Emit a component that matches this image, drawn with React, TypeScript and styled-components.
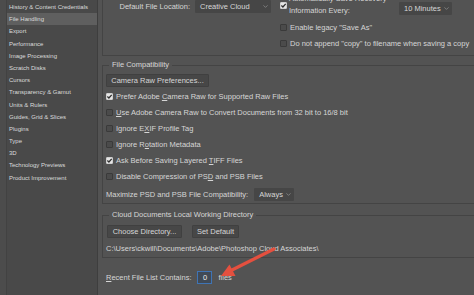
import styled, { createGlobalStyle } from 'styled-components';
import { ChevronDown } from 'lucide-react';

const GlobalStyle = createGlobalStyle`
  html, body {
    margin: 0;
    padding: 0;
    background: #535353;
  }

  * {
    box-sizing: border-box;
  }
`;

const navItems = [
  'History & Content Credentials',
  'File Handling',
  'Export',
  'Performance',
  'Image Processing',
  'Scratch Disks',
  'Cursors',
  'Transparency & Gamut',
  'Units & Rulers',
  'Guides, Grid & Slices',
  'Plugins',
  'Type',
  '3D',
  'Technology Previews',
  'Product Improvement',
];

const Check = ({ checked }: { checked?: boolean }) => (
  <CheckBox $checked={checked}>
    {checked && (
      <svg width='7' height='7' viewBox='0 0 7 7'>
        <path d='M1.4 3.6 L2.9 5 L5.7 1.9' fill='none' stroke='#2e2e2e' strokeWidth='1.3' />
      </svg>
    )}
  </CheckBox>
);

const Select = ({ value, width }: { value: string; width: number }) => (
  <SelectBox $width={width}>
    <span>{value}</span>
    <ChevronDown size={7} strokeWidth={2.2} />
  </SelectBox>
);

const App = () => {
  return (
    <Window>
      <GlobalStyle />
      <Sidebar>
        <NavList>
          {navItems.map(item => (
            <NavItem key={item} $active={item === 'File Handling'}>
              {item}
            </NavItem>
          ))}
        </NavList>
      </Sidebar>

      <Main>
        <SavingGroup>
          <LocationCol>
            <span>Default File Location:</span>
            <Select value='Creative Cloud' width={76} />
          </LocationCol>
          <SavingCol>
            <RecoveryRow>
              <Check checked />
              <TwoLine>
                Automatically Save Recovery
                <br />
                Information Every:
              </TwoLine>
              <Select value='10 Minutes' width={53} />
            </RecoveryRow>
            <CheckRow>
              <Check />
              Enable legacy "Save As"
            </CheckRow>
            <CheckRow>
              <Check />
              Do not append "copy" to filename when saving a copy
            </CheckRow>
          </SavingCol>
        </SavingGroup>

        <Group>
          <Legend>File Compatibility</Legend>
          <Button $width={103}>Camera Raw Preferences...</Button>
          <CheckList>
            <CheckRow>
              <Check checked />
              <span>
                Prefer Adobe <u>C</u>amera Raw for Supported Raw Files
              </span>
            </CheckRow>
            <CheckRow>
              <Check />
              <span>
                <u>U</u>se Adobe Camera Raw to Convert Documents from 32 bit to 16/8 bit
              </span>
            </CheckRow>
            <CheckRow>
              <Check />
              <span>
                Ignore E<u>X</u>IF Profile Tag
              </span>
            </CheckRow>
            <CheckRow>
              <Check />
              <span>
                Ignore R<u>o</u>tation Metadata
              </span>
            </CheckRow>
            <CheckRow>
              <Check checked />
              <span>
                Ask Before Saving Layered <u>T</u>IFF Files
              </span>
            </CheckRow>
            <CheckRow>
              <Check />
              <span>
                Disable Compression of PS<u>D</u> and PSB Files
              </span>
            </CheckRow>
            <MaximizeRow>
              <span>Maximize PSD and PSB File Compatibility:</span>
              <Select value='Always' width={40} />
            </MaximizeRow>
          </CheckList>
        </Group>

        <CloudGroup>
          <Legend>Cloud Documents Local Working Directory</Legend>
          <ButtonRow>
            <Button $width={75}>Choose Directory...</Button>
            <Button $width={47}>Set Default</Button>
          </ButtonRow>
          <PathText>C:\Users\ckwill\Documents\Adobe\Photoshop Cloud Associates\</PathText>
        </CloudGroup>

        <RecentRow>
          <span>
            <u>R</u>ecent File List Contains:
          </span>
          <NumberInput>0</NumberInput>
          <span>files</span>
        </RecentRow>
      </Main>

      <Arrow width='474' height='295' viewBox='0 0 474 295'>
        <line x1='274' y1='249' x2='232' y2='270' stroke='#e4503f' strokeWidth='3.2' strokeLinecap='round' />
        <polygon points='221,276 229.5,264.5 235.5,276' fill='#e4503f' />
      </Arrow>
    </Window>
  );
};

const Window = styled.div`
  position: relative;
  display: flex;
  width: 474px;
  height: 295px;
  overflow: hidden;

  background: #535353;
  color: #d6d6d6;
  font-family: 'Liberation Sans', Arial, sans-serif;
  font-size: 7.5px;
`;

const Sidebar = styled.nav`
  flex: none;
  width: 98px;
  padding-left: 6px;

  background: #4c4c4c;
  border-right: 1px solid #3e3e3e;
`;

const NavList = styled.ul`
  height: 100%;
  margin: 0;
  padding: 1px 0 0;
  list-style: none;

  background: #494949;
  border-left: 1px solid #424242;
`;

const NavItem = styled.li<{ $active?: boolean }>`
  height: 12.2px;
  padding-left: 2px;

  white-space: nowrap;
  font-size: 6px;
  line-height: 12.2px;

  color: #dcdcdc;
  background: ${({ $active }) => ($active ? '#5f5f5f' : 'transparent')};
`;

const Main = styled.main`
  flex: 1;
  min-width: 0;
  padding-left: 4px;
  overflow: hidden;
`;

const SavingGroup = styled.div`
  display: flex;
  width: 420px;
  height: 68px;
  margin-top: -12px;
  padding-top: 4px;

  border: 1px solid #444444;
`;

const LocationCol = styled.div`
  display: flex;
  justify-content: flex-end;
  align-items: center;
  gap: 5px;

  flex: none;
  width: 176px;
  height: 13px;
  margin-top: 7px;
  padding-right: 8px;
  white-space: nowrap;
`;

const SavingCol = styled.div`
  display: flex;
  flex-direction: column;
  gap: 4px;
  padding-left: 1px;
`;

const RecoveryRow = styled.div`
  display: flex;
  align-items: flex-start;
  gap: 2px;

  height: 24px;

  > span:first-child {
    margin-top: 9px;
  }

  > div:last-child {
    margin-top: 9px;
  }
`;

const TwoLine = styled.div`
  width: 108px;
  line-height: 12px;
  white-space: nowrap;
`;

const CheckBox = styled.span<{ $checked?: boolean }>`
  display: inline-flex;
  align-items: center;
  justify-content: center;
  flex: none;
  width: 7px;
  height: 7px;

  background: ${({ $checked }) => ($checked ? '#e6e6e6' : '#4b4b4b')};
  border: 1px solid ${({ $checked }) => ($checked ? '#cfcfcf' : '#3a3a3a')};
  border-radius: 1px;

  svg {
    margin: -1px;
  }
`;

const CheckRow = styled.div`
  display: flex;
  align-items: center;
  gap: 3px;

  height: 12px;
  white-space: nowrap;
`;

const SelectBox = styled.div<{ $width: number }>`
  display: flex;
  justify-content: space-between;
  align-items: center;

  flex: none;
  width: ${({ $width }) => $width}px;
  height: 13px;
  padding: 0 2px 0 5px;

  white-space: nowrap;
  background: #464646;
  border-radius: 1px;

  svg {
    color: #9a9a9a;
  }
`;

const Group = styled.fieldset`
  width: 420px;
  min-width: 0;
  margin: 4px 0 0;
  padding: 4px 0 2px 3px;

  border: 1px solid #444444;
`;

const CloudGroup = styled(Group)`
  margin-top: 6px;
  padding: 5px 0 3px 3px;
`;

const Legend = styled.legend`
  margin-left: 3px;
  padding: 0 3px;
  line-height: 10px;
  white-space: nowrap;
`;

const Button = styled.div<{ $width: number }>`
  display: flex;
  align-items: center;
  justify-content: center;

  width: ${({ $width }) => $width}px;
  height: 13px;
  margin-bottom: 3px;

  white-space: nowrap;
  background: #474747;
  border: 1px solid #404040;
  border-radius: 1px;
`;

const CheckList = styled.div`
  display: flex;
  flex-direction: column;
  gap: 4px;
`;

const MaximizeRow = styled.div`
  display: flex;
  align-items: center;
  gap: 6px;

  height: 13px;
  margin-top: 2px;
  white-space: nowrap;
`;

const ButtonRow = styled.div`
  display: flex;
  gap: 10px;
  padding-left: 1px;
`;

const PathText = styled.div`
  height: 10px;
  margin-top: 3px;
  line-height: 10px;
  white-space: nowrap;
`;

const RecentRow = styled.div`
  display: flex;
  align-items: center;
  gap: 6px;

  height: 14px;
  margin-top: 12px;
  padding-left: 4px;
  white-space: nowrap;
`;

const NumberInput = styled.span`
  display: flex;
  align-items: center;
  justify-content: center;

  width: 15px;
  height: 13px;

  color: #eeeeee;
  background: #404a56;
  border: 1px solid #3f74b5;
`;

const Arrow = styled.svg`
  position: absolute;
  top: 0;
  left: 0;
  pointer-events: none;
`;

export default App;
